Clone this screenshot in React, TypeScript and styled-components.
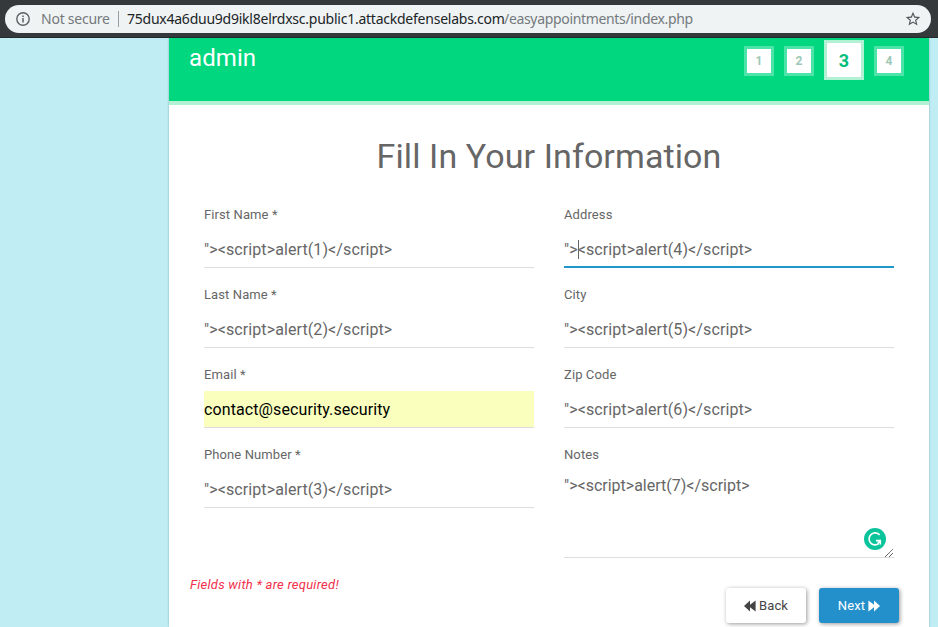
import React from 'react';
import styled, { createGlobalStyle } from 'styled-components';

const GlobalStyle = createGlobalStyle`
  * { box-sizing: border-box; }
  html, body { margin: 0; height: 627px; overflow: hidden; }
  body {
    background: #c0ecf3;
    font-family: Roboto, "Liberation Sans", sans-serif;
    font-size: 13px;
    line-height: 24px;
    letter-spacing: 0.1px;
    color: #666;
  }
`;

const Screen = styled.div`
  height: 627px;
  overflow: hidden;
  display: flex;
  flex-direction: column;
`;

const Toolbar = styled.div`
  flex: none;
  height: 38px;
  padding: 5px 7px 5px 5px;
  background: #35393c;
  border-bottom: 1px solid #252a2c;
`;

const AddressBar = styled.div`
  height: 28px;
  border-radius: 14px;
  background: #eff3f4;
  display: flex;
  align-items: center;
  padding: 0 10px 0 11px;
  font-family: "Noto Sans", "Open Sans", sans-serif;
  font-size: 14px;
  letter-spacing: 0;
  white-space: nowrap;
  color: #202427;
  svg { flex: none; display: block; }
`;

const Security = styled.span`
  width: 68px;
  margin-left: 11px;
  color: #74797d;
  letter-spacing: -0.24px;
`;

const Divider = styled.span`
  width: 1px;
  height: 16px;
  margin: 0 8px 0 9px;
  background: #989da0;
`;

const Url = styled.span`
  flex: 1;
`;

const Host = styled.span`
  display: inline-block;
  width: 377px;
  letter-spacing: -0.24px;
`;

const Path = styled.span`
  color: #74797d;
  letter-spacing: -0.33px;
`;

const Card = styled.main`
  flex: 1;
  width: 760px;
  margin-left: 169px;
  background: #fff;
  box-shadow: 0 0 2px rgba(0, 60, 70, 0.35);
`;

const Header = styled.header`
  height: 67px;
  padding: 2px 25px 0 20px;
  background: #00d77f;
  border-bottom: 4px solid #b2f1d4;
  display: flex;
  justify-content: space-between;
  align-items: flex-start;
`;

const Company = styled.span`
  font-size: 24px;
  line-height: 36px;
  color: #fff;
  letter-spacing: 0.1px;
`;

const Steps = styled.div`
  height: 40px;
  display: flex;
  align-items: center;
  gap: 10px;
`;

const Step = styled.div<{ $active?: boolean }>`
  width: ${p => (p.$active ? 40 : 30)}px;
  height: ${p => (p.$active ? 40 : 30)}px;
  margin-top: ${p => (p.$active ? 0 : 2)}px;
  border: 3px solid ${p => (p.$active ? '#b2f1d4' : '#4de4a9')};
  background: #fff;
  color: ${p => (p.$active ? '#06bd7d' : '#9bc8b6')};
  font-size: ${p => (p.$active ? 18 : 12)}px;
  font-weight: 700;
  display: flex;
  align-items: center;
  justify-content: center;
  padding-top: ${p => (p.$active ? 1 : 0)}px;
`;

const Title = styled.h2`
  margin: 32px 0 0;
  font-size: 34px;
  font-weight: 400;
  line-height: 38px;
  letter-spacing: 0.1px;
  text-align: center;
`;

const Columns = styled.div`
  display: grid;
  grid-template-columns: 330px 330px;
  gap: 30px;
  padding: 28px 35px 0;
`;

const Column = styled.div`
  display: flex;
  flex-direction: column;
  gap: 15px;
`;

const Label = styled.div`
  height: 24px;
  margin-bottom: 4px;
`;

type InputLook = 'plain' | 'focused' | 'autofilled';

const Input = styled.div<{ $look: InputLook }>`
  position: relative;
  height: 37px;
  font-size: 16px;
  line-height: 37px;
  color: ${p => (p.$look === 'autofilled' ? '#000' : '#666')};
  background: ${p => (p.$look === 'autofilled' ? '#faffbd' : 'transparent')};
  box-shadow: inset 0 ${p => (p.$look === 'focused' ? '-2px 0 #2196c8' : '-1px 0 #ddd')};
`;

const Caret = styled.i`
  position: absolute;
  left: 14px;
  top: 9px;
  width: 1px;
  height: 19px;
  background: #666;
`;

const NotesArea = styled.div`
  position: relative;
  height: 87px;
  font-size: 16px;
  line-height: 29px;
  letter-spacing: 0;
  box-shadow: inset 0 -1px 0 #ddd;
`;

const Badge = styled.svg`
  position: absolute;
  right: 8px;
  top: 57px;
`;

const Grip = styled.svg`
  position: absolute;
  right: 1px;
  bottom: 1px;
`;

const Footer = styled.footer`
  display: flex;
  align-items: flex-start;
  justify-content: space-between;
  padding: 15px 30px 0 21px;
`;

const Required = styled.em`
  color: #f0304c;
  letter-spacing: 0.25px;
`;

const Buttons = styled.div`
  display: flex;
  gap: 13px;
  margin-top: 15px;
`;

const Button = styled.button<{ $primary?: boolean }>`
  width: 80px;
  height: 35px;
  padding: 0;
  border: 0;
  border-radius: 3px;
  background: ${p => (p.$primary ? '#2490cb' : '#fff')};
  color: ${p => (p.$primary ? '#fff' : '#444')};
  box-shadow: 1px 1px 4px rgba(0, 0, 0, 0.4);
  font: 400 13px/24px Roboto, sans-serif;
  letter-spacing: 0.15px;
  display: flex;
  align-items: center;
  justify-content: center;
  gap: 3px;
`;

const InfoIcon = () => (
  <svg width="14" height="14" viewBox="0 0 14 14" fill="none" stroke="#5b6064">
    <circle cx="7" cy="7" r="6.2" strokeWidth="1.4" />
    <path d="M7 6v4.4M7 3.4v1.5" strokeWidth="1.5" />
  </svg>
);

const StarIcon = () => (
  <svg width="16" height="16" viewBox="1 1 22 22" fill="#55595d">
    <path d="M22 9.24l-7.19-.62L12 2 9.19 8.63 2 9.24l5.46 4.73L5.82 21 12 17.27 18.18 21l-1.63-7.03L22 9.24zM12 15.4l-3.76 2.27 1-4.28-3.32-2.88 4.38-.38L12 6.1l1.71 4.04 4.38.38-3.32 2.88 1 4.28L12 15.4z" />
  </svg>
);

const BackwardIcon = () => (
  <svg width="12" height="12" viewBox="0 0 12 12" fill="currentColor">
    <path d="M6 .5V4.7L11.6.5v11L6 7.3v4.2L0 6z" />
  </svg>
);

const ForwardIcon = () => (
  <svg width="12" height="12" viewBox="0 0 12 12" fill="currentColor">
    <path d="M6 .5V4.7L.4.5v11L6 7.3v4.2L12 6z" />
  </svg>
);

const GrammarBadge = () => (
  <Badge width="22" height="22" viewBox="0 0 22 22" fill="none">
    <circle cx="11" cy="11" r="11" fill="#0bc49c" />
    <path d="M15.6 6.9A6 6 0 1 0 14.8 15.6M11.9 12.6h4.4v4M16.3 12.6L13.8 15.6" stroke="#fff" strokeWidth="1.6" />
  </Badge>
);

interface FieldProps {
  label: string;
  value: string;
  look?: InputLook;
}

const Field = ({ label, value, look = 'plain' }: FieldProps) => (
  <div>
    <Label>{label}</Label>
    <Input $look={look}>
      {value}
      {look === 'focused' && <Caret />}
    </Input>
  </div>
);

const payload = (n: number) => `"><script>alert(${n})</script>`;

export default function App() {
  return (
    <Screen>
      <GlobalStyle />
      <Toolbar>
        <AddressBar>
          <InfoIcon />
          <Security>Not secure</Security>
          <Divider />
          <Url>
            <Host>75dux4a6duu9d9ikl8elrdxsc.public1.attackdefenselabs.com</Host>
            <Path>/easyappointments/index.php</Path>
          </Url>
          <StarIcon />
        </AddressBar>
      </Toolbar>
      <Card>
        <Header>
          <Company>admin</Company>
          <Steps>
            <Step>1</Step>
            <Step>2</Step>
            <Step $active>3</Step>
            <Step>4</Step>
          </Steps>
        </Header>
        <Title>Fill In Your Information</Title>
        <Columns>
          <Column>
            <Field label="First Name *" value={payload(1)} />
            <Field label="Last Name *" value={payload(2)} />
            <Field label="Email *" value="contact@security.security" look="autofilled" />
            <Field label="Phone Number *" value={payload(3)} />
          </Column>
          <Column>
            <Field label="Address" value={payload(4)} look="focused" />
            <Field label="City" value={payload(5)} />
            <Field label="Zip Code" value={payload(6)} />
            <div>
              <Label>Notes</Label>
              <NotesArea>
                {payload(7)}
                <GrammarBadge />
                <Grip width="8" height="8" viewBox="0 0 8 8" stroke="#444" fill="none">
                  <path d="M0 8L8 0M4 8L8 4" strokeWidth="1" strokeDasharray="1.2 0.3" />
                </Grip>
              </NotesArea>
            </div>
          </Column>
        </Columns>
        <Footer>
          <Required>Fields with * are required!</Required>
          <Buttons>
            <Button>
              <BackwardIcon />
              Back
            </Button>
            <Button $primary>
              Next
              <ForwardIcon />
            </Button>
          </Buttons>
        </Footer>
      </Card>
    </Screen>
  );
}
